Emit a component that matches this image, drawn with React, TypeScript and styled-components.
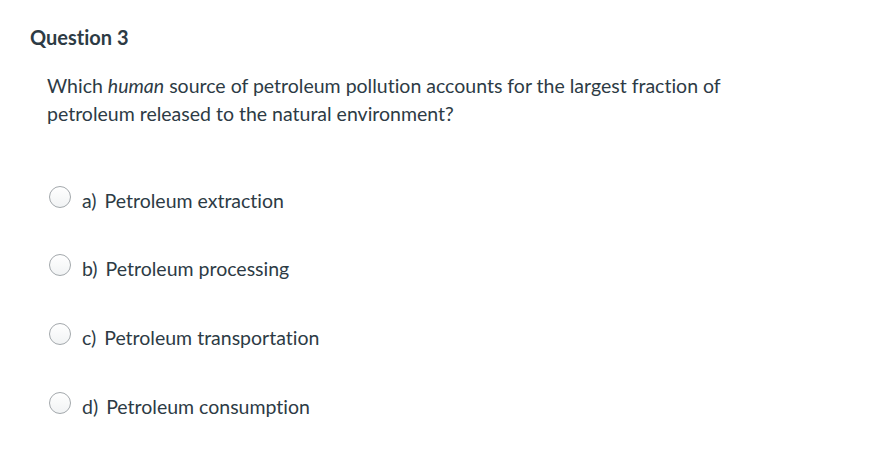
import React from 'react';
import styled, {createGlobalStyle} from 'styled-components';

const GlobalStyle = createGlobalStyle`
  html, body {
    margin: 0;
    padding: 0;
    background: #fff;
  }
  body {
    font-family: Lato, "Open Sans", "Liberation Sans", sans-serif;
    font-variant-ligatures: none;
    color: #2d3b45;
  }
`;

const Page = styled.div`
  width: 875px;
  height: 462px;
  box-sizing: border-box;
  padding: 24px 0 0 30px;
`;

const Title = styled.h2`
  margin: 0;
  font-size: 20px;
  font-weight: 700;
  line-height: 26px;
  color: #2d3b45;
`;

const Body = styled.div`
  padding: 0 0 0 17px;
  margin-top: 22px;
`;

const Prompt = styled.p`
  margin: 0;
  font-size: 19.5px;
  line-height: 28px;
  em {
    font-style: italic;
  }
`;

const Answers = styled.div`
  display: flex;
  flex-direction: column;
  gap: 40.7px;
  margin-top: 58.5px;
`;

const Answer = styled.label`
  display: flex;
  align-items: flex-start;
  gap: 11px;
  height: 28px;
  line-height: 28px;
  font-size: 19.5px;
  padding-left: 2px;
`;

const Radio = styled.span`
  width: 20px;
  height: 20px;
  margin-top: -1px;
  border-radius: 50%;
  border: 1px solid #a3a8ac;
  background: linear-gradient(#ffffff, #f1f3f4);
  flex: none;
`;

const Letter = styled.span`
  margin-right: 8px;
`;

const options = [
  ['a)', 'Petroleum extraction'],
  ['b)', 'Petroleum processing'],
  ['c)', 'Petroleum transportation'],
  ['d)', 'Petroleum consumption'],
];

export default function App() {
  return (
    <Page>
      <GlobalStyle />
      <Title>Question 3</Title>
      <Body>
        <Prompt>
          Which <em>human</em> source of petroleum pollution accounts for the largest fraction of
          <br />
          petroleum released to the natural environment?
        </Prompt>
        <Answers>
          {options.map(([letter, text]) => (
            <Answer key={letter}>
              <Radio />
              <span>
                <Letter>{letter}</Letter>
                {text}
              </span>
            </Answer>
          ))}
        </Answers>
      </Body>
    </Page>
  );
}
